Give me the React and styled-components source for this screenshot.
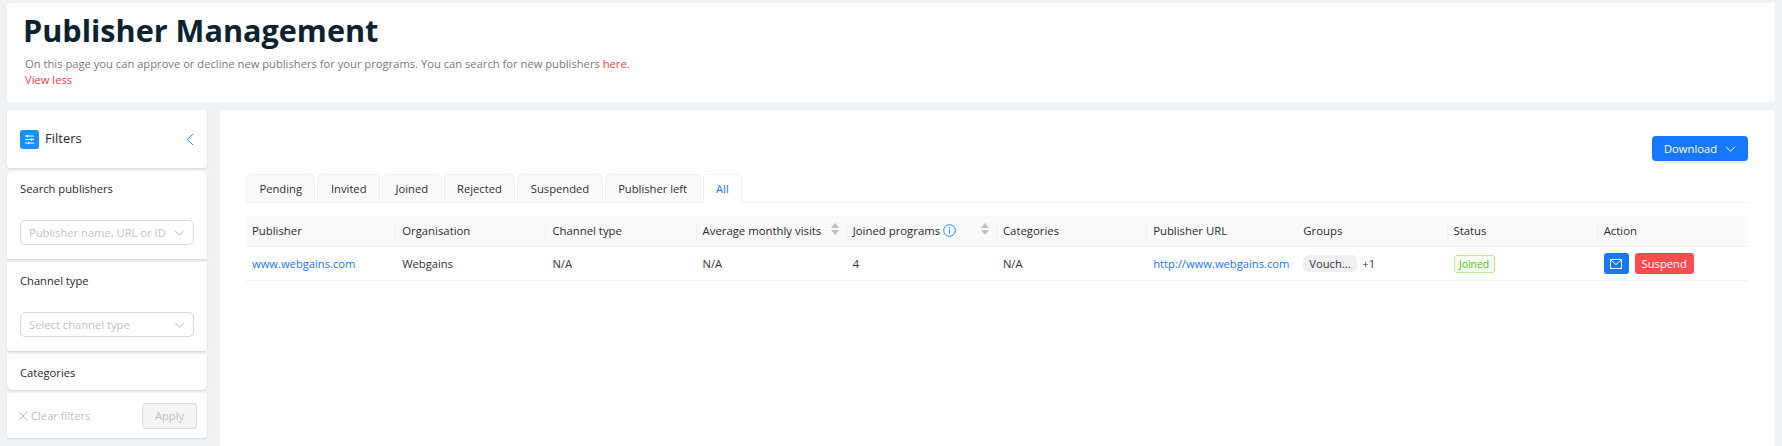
import React from 'react';
import styled, { createGlobalStyle } from 'styled-components';

const Global = createGlobalStyle`
  html, body { margin: 0; padding: 0; background: #f0f3f6; overflow: hidden; }
  body { font-family: "Open Sans", "Liberation Sans", sans-serif; font-size: 11.2px; color: #1f2a33; }
`;
const Page = styled.div`
  width: 1782px; height: 446px; box-sizing: border-box; padding: 3px 7px 0;
  display: flex; flex-direction: column; gap: 8px; overflow: hidden;
`;
const Header = styled.header`
  height: 99px; box-sizing: border-box; background: #fff; border-radius: 3px; padding: 6px 18px 0; flex: none;
`;
const Title = styled.h1`
  margin: 0 0 0 -2px; font-size: 30.6px; line-height: 42px; font-weight: 700; color: #0b2230; letter-spacing: 0;
`;
const Intro = styled.p`
  margin: 5px 0 0 0; font-size: 11.2px; line-height: 16px; color: #7a7a7a;
`;
const RedLink = styled.span`color: #f5413f;`;
const ViewLess = styled.div`
  line-height: 16px; font-size: 11.2px; color: #f5413f;
`;
const Body = styled.div`display: flex; gap: 13px; flex: 1; min-height: 0;`;
const Sidebar = styled.aside`
  width: 200px; flex: none; display: flex; flex-direction: column; gap: 3px;
`;
const Card = styled.div`
  background: #fff; border-radius: ${p => p.$radius || '3px'}; box-shadow: 0 1px 2px rgba(0,0,0,.12);
  box-sizing: border-box; height: ${p => p.$h}px; padding: ${p => p.$pad || '0 14px'};
`;
const FilterHead = styled(Card)`display: flex; align-items: center; padding: 0 13px;`;
const FilterBadge = styled.span`
  width: 19px; height: 19px; border-radius: 3px; background: #1890ff; display: flex; align-items: center; justify-content: center; margin-right: 6px;
`;
const FilterTitle = styled.span`font-size: 13px; font-weight: 500; color: #1a2b36; flex: 1; margin-top: -2px;`;
const SectionLabel = styled.div`font-size: 11.2px; line-height: 18px; color: #1f2a33;`;
const Select = styled.div`
  height: 25px; box-sizing: border-box; margin-top: 22px; border: 1px solid #d9d9d9; border-radius: 5px; padding: 0 8px; display: flex; align-items: center; justify-content: space-between; color: #c4c4c4; font-size: 11.2px; white-space: nowrap;
`;
const Footer = styled(Card)`display: flex; align-items: center; justify-content: space-between; padding: 0 10px 0 11px;`;
const Clear = styled.span`display: flex; align-items: center; gap: 3px; color: #bfbfbf; font-size: 11.2px;`;
const ApplyBtn = styled.span`
  width: 55px; height: 26px; box-sizing: border-box; border: 1px solid #d9d9d9; background: #f5f5f5; border-radius: 4px; color: #bfbfbf; display: flex; align-items: center; justify-content: center; font-size: 11.2px;
`;
const Main = styled.main`
  width: 1555px; background: #fff; border-radius: 3px 3px 0 0; padding: 26px 27px 0 26px; box-sizing: border-box; flex: none;
`;
const Toolbar = styled.div`display: flex; justify-content: flex-end; height: 38px;`;
const Download = styled.span`
  width: 96px; height: 25px; background: #1677ff; border-radius: 4px; color: #fff; font-size: 11.2px; display: flex; align-items: center; justify-content: center; gap: 8px; box-shadow: 0 2px 0 rgba(5,145,255,.1);
`;
const Tabs = styled.div`display: flex; gap: 2px; height: 29px; border-bottom: 1px solid #f0f0f0; box-sizing: border-box;`;
const Tab = styled.span`
  height: 29px; box-sizing: border-box; padding: 0 12.5px; border: 1px solid #f0f0f0; background: ${p => p.$active ? '#fff' : '#fafafa'}; border-bottom-color: ${p => p.$active ? '#fff' : '#f0f0f0'}; border-radius: 5px 5px 0 0; color: ${p => p.$active ? '#1677ff' : '#2a2f38'}; font-size: 11.2px; line-height: 27px;
`;
const grid = 'repeat(10, 150.2px)';
const HeadRow = styled.div`
  margin-top: 13px; display: grid; grid-template-columns: ${grid}; height: 31px; background: #fafafa; border-bottom: 1px solid #f0f0f0; border-radius: 5px 5px 0 0; box-sizing: border-box; align-items: center;
`;
const HeadCell = styled.div`
  display: flex; align-items: center; height: 100%; box-sizing: border-box; padding: 0 6px 2px; font-weight: 500; font-size: 11.35px; position: relative; white-space: nowrap; color: #1f2a33;
  ${p => p.$sep && `&::before { content: ''; position: absolute; left: -1px; top: 6px; height: 18px; width: 1px; background: #f0f0f0; }`}
`;
const Sort = styled.span`position: absolute; right: 8px; top: 7px; display: flex; flex-direction: column; gap: 2px;`;
const DataRow = styled.div`
  display: grid; grid-template-columns: ${grid}; height: 34px; border-bottom: 1px solid #f0f0f0; box-sizing: border-box; align-items: center;
`;
const DataCell = styled.div`padding: 0 6px; font-size: 11.2px; display: flex; align-items: center; white-space: nowrap; color: ${p => p.$link ? '#1677ff' : '#2f3338'};`;
const Tag = styled.span`background: #f0f0f0; border-radius: 5px; padding: 0 6px; height: 17px; line-height: 17px; width: 42px; overflow: hidden; margin-right: 5px;`;
const Status = styled.span`border: 1px solid #b7eb8f; background: #f6ffed; color: #52c41a; border-radius: 3px; height: 18px; width: 41px; box-sizing: border-box; text-align: center; line-height: 16px; font-size: 10.4px;`;
const MailBtn = styled.span`width: 25px; height: 21px; border-radius: 3px; background: #1677ff; display: flex; align-items: center; justify-content: center; margin-right: 6px;`;
const Suspend = styled.span`width: 59px; height: 21px; border-radius: 3px; background: #ff4d4f; color: #fff; font-size: 11.2px; line-height: 21px; text-align: center;`;

const Chevron = ({ c = '#bfbfbf', w = 11, h = 6 }) => (
  <svg width={w} height={h} viewBox="0 0 11 6" fill="none"><path d="M1 .7 5.5 5.3 10 .7" stroke={c} strokeWidth="1" /></svg>
);
const SortIcon = () => (
  <Sort>
    <svg width="8" height="5" viewBox="0 0 8 5"><path d="M4 0 8 5H0z" fill="#bfbfbf" /></svg>
    <svg width="8" height="5" viewBox="0 0 8 5"><path d="M0 0h8L4 5z" fill="#bfbfbf" /></svg>
  </Sort>
);

export default function App() {
  return (
    <Page>
      <Global />
      <Header>
        <Title>Publisher Management</Title>
        <Intro>On this page you can approve or decline new publishers for your programs. You can search for new publishers <RedLink>here</RedLink>.</Intro>
        <ViewLess>View less</ViewLess>
      </Header>
      <Body>
        <Sidebar>
          <FilterHead $h={58}>
            <FilterBadge>
              <svg width="11" height="11" viewBox="0 0 11 11" fill="none" stroke="#fff" strokeWidth="1.2"><path d="M1 2h9M1 5.5h9M1 9h9" /><path d="M3.5 .8v2.4M7.5 4.3v2.4M4.5 7.8v2.4" /></svg>
            </FilterBadge>
            <FilterTitle>Filters</FilterTitle>
            <svg width="8" height="13" viewBox="0 0 8 13" fill="none"><path d="M7 1 1.2 6.5 7 12" stroke="#1890ff" strokeWidth="1" /></svg>
          </FilterHead>
          <Card $h={88} $pad="9px 13px 0" $radius="6px 6px 0 0">
            <SectionLabel>Search publishers</SectionLabel>
            <Select>Publisher name, URL or ID<Chevron /></Select>
          </Card>
          <Card $h={89} $pad="10px 13px 0">
            <SectionLabel>Channel type</SectionLabel>
            <Select>Select channel type<Chevron /></Select>
          </Card>
          <Card $h={36} $pad="10px 13px 0" $radius="0 0 6px 6px">
            <SectionLabel>Categories</SectionLabel>
          </Card>
          <Footer $h={45}>
            <Clear>
              <svg width="10" height="10" viewBox="0 0 10 10" fill="none"><path d="M.7.7l8.6 8.6M9.3.7.7 9.3" stroke="#bfbfbf" /></svg>
              Clear filters
            </Clear>
            <ApplyBtn>Apply</ApplyBtn>
          </Footer>
        </Sidebar>
        <Main>
          <Toolbar>
            <Download>Download <Chevron c="#fff" /></Download>
          </Toolbar>
          <Tabs>
            <Tab>Pending</Tab>
            <Tab>Invited</Tab>
            <Tab>Joined</Tab>
            <Tab>Rejected</Tab>
            <Tab>Suspended</Tab>
            <Tab>Publisher left</Tab>
            <Tab $active>All</Tab>
          </Tabs>
          <HeadRow>
            <HeadCell>Publisher</HeadCell>
            <HeadCell $sep>Organisation</HeadCell>
            <HeadCell $sep>Channel type</HeadCell>
            <HeadCell $sep>Average monthly visits<SortIcon /></HeadCell>
            <HeadCell $sep>Joined programs&nbsp;
              <svg width="13" height="13" viewBox="0 0 13 13" fill="none"><circle cx="6.5" cy="6.5" r="5.8" stroke="#1890ff" /><path d="M6.5 5.5v4M6.5 3.2v1.2" stroke="#1890ff" /></svg>
              <SortIcon />
            </HeadCell>
            <HeadCell $sep>Categories</HeadCell>
            <HeadCell $sep>Publisher URL</HeadCell>
            <HeadCell>Groups</HeadCell>
            <HeadCell $sep>Status</HeadCell>
            <HeadCell $sep>Action</HeadCell>
          </HeadRow>
          <DataRow>
            <DataCell $link>www.webgains.com</DataCell>
            <DataCell>Webgains</DataCell>
            <DataCell>N/A</DataCell>
            <DataCell>N/A</DataCell>
            <DataCell>4</DataCell>
            <DataCell>N/A</DataCell>
            <DataCell $link>http://www.webgains.com</DataCell>
            <DataCell><Tag>Vouch...</Tag>+1</DataCell>
            <DataCell><Status>Joined</Status></DataCell>
            <DataCell>
              <MailBtn>
                <svg width="12" height="10" viewBox="0 0 12 10" fill="none" stroke="#fff"><rect x=".5" y=".5" width="11" height="9" /><path d="M.5.8 6 5.5 11.5.8" /></svg>
              </MailBtn>
              <Suspend>Suspend</Suspend>
            </DataCell>
          </DataRow>
        </Main>
      </Body>
    </Page>
  );
}
